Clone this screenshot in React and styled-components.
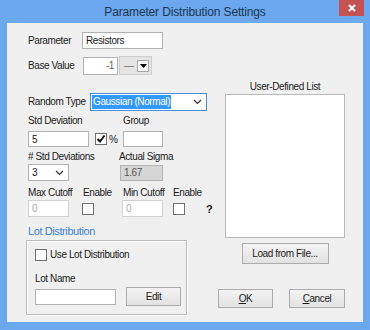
import styled, { createGlobalStyle } from "styled-components";

const GlobalStyle = createGlobalStyle`
  html, body { margin: 0; padding: 0; }
  body {
    font-family: "Liberation Sans", Arial, sans-serif;
    background: #ffffff;
  }
`;

const Window = styled.div`
  width: 370px;
  height: 330px;
  box-sizing: border-box;
  background: #6ba8ee;
  padding: 0 7px 8px 7px;
  display: flex;
  flex-direction: column;
`;

const TitleBar = styled.div`
  height: 23px;
  margin: 0 -7px;
  display: grid;
  grid-template-columns: 1fr auto 1fr;
  align-items: start;
`;

const Title = styled.div`
  grid-column: 2;
  font-size: 12px;
  letter-spacing: -0.15px;
  line-height: 24px;
  color: #1b3552;
  white-space: nowrap;
`;

const CloseButton = styled.div`
  grid-column: 3;
  justify-self: end;
  margin-right: 6px;
  width: 25px;
  height: 16px;
  background: #c75050;
  display: flex;
  align-items: center;
  justify-content: center;
`;

const Client = styled.div`
  flex: 1;
  background: #f0f0f0;
  display: flex;
  padding-left: 19px;
  font-size: 10px;
  letter-spacing: -0.4px;
  color: #1c1c1c;
`;

const LeftCol = styled.div`
  width: 192px;
  display: flex;
  flex-direction: column;
`;

const RightCol = styled.div`
  width: 127px;
  display: flex;
  flex-direction: column;
  padding-top: 58px;
`;

const Row = styled.div`
  display: flex;
  align-items: center;
  height: ${(p) => p.$h}px;
  margin-top: ${(p) => p.$mt}px;
  padding-left: ${(p) => (p.$flush ? 0 : 2)}px;
  white-space: nowrap;
`;

const Slot = styled.div`
  width: ${(p) => p.$w}px;
  flex: none;
  display: flex;
  align-items: center;
`;

const Label = styled.span`
  line-height: 12px;
  white-space: nowrap;
`;

const TextBox = styled.div`
  box-sizing: border-box;
  width: ${(p) => p.$w}px;
  height: ${(p) => p.$h || 17}px;
  background: #fff;
  border: 1px solid ${(p) => (p.$disabled ? "#d2d2d2" : "#b2b2b2")};
  color: ${(p) => (p.$disabled ? "#a8a8a8" : p.$right ? "#666" : "#1c1c1c")};
  display: flex;
  align-items: center;
  justify-content: ${(p) => (p.$right ? "flex-end" : "flex-start")};
  padding: 0 3px 0 3px;
  font-size: 10px;
  flex: none;
`;

const ReadOnlyBox = styled(TextBox)`
  background: #d6d6d6;
  border-color: #b6b6b6;
  color: #555;
`;

const Combo = styled.div`
  box-sizing: border-box;
  width: 33px;
  height: 19px;
  margin-left: 1px;
  background: #e4e4e4;
  border: 1px solid #cdcdcd;
  display: flex;
  align-items: center;
  justify-content: space-between;
  padding: 0 2px 0 4px;
  color: #777;
`;

const ComboButton = styled.div`
  box-sizing: border-box;
  width: 12px;
  height: 12px;
  background: #f7f7f7;
  border: 1px solid #a9a9a9;
  display: flex;
  align-items: center;
  justify-content: center;
`;

const Select = styled.div`
  box-sizing: border-box;
  width: ${(p) => p.$w}px;
  height: ${(p) => p.$h}px;
  background: #fff;
  border: 1px solid ${(p) => (p.$focus ? "#4a8fd6" : "#b2b2b2")};
  display: flex;
  align-items: center;
  justify-content: space-between;
  padding: 0 4px 0 1px;
  flex: none;
`;

const Highlight = styled.span`
  background: #3399ff;
  color: #fff;
  padding: 1px 1px;
  line-height: 12px;
`;

const PlainValue = styled.span`
  padding-left: 2px;
`;

const Check = styled.div`
  box-sizing: border-box;
  width: 12px;
  height: 12px;
  background: #fff;
  border: 1px solid #6f6f6f;
  flex: none;
  display: flex;
  align-items: center;
  justify-content: center;
`;

const Percent = styled.span`
  margin-left: 2px;
`;

const Question = styled.span`
  font-weight: bold;
  font-size: 11px;
  letter-spacing: 0;
`;

const SectionTitle = styled.div`
  margin-top: 7px;
  height: 14px;
  padding-left: 2px;
  line-height: 14px;
  font-size: 11px;
  letter-spacing: -0.4px;
  color: #3c82d8;
`;

const GroupBox = styled.div`
  box-sizing: border-box;
  margin-top: 2px;
  width: 161px;
  height: 75px;
  border: 1px solid #bdbdbd;
  box-shadow: inset 1px 1px 0 #fff, 1px 1px 0 #fff;
  padding: 8px 0 0 8px;
  display: flex;
  flex-direction: column;
`;

const CheckLabel = styled.span`
  margin-left: 3px;
  line-height: 12px;
`;

const Button = styled.div`
  box-sizing: border-box;
  width: ${(p) => p.$w}px;
  height: ${(p) => p.$h}px;
  margin-left: ${(p) => p.$ml || 0}px;
  border: 1px solid #acacac;
  background: linear-gradient(#f3f3f3, #e2e2e2);
  display: flex;
  align-items: center;
  justify-content: center;
  flex: none;
  white-space: nowrap;
`;

const Mnemonic = styled.span`
  text-decoration: underline;
`;

const ListHeader = styled.div`
  margin-left: 7px;
  width: 120px;
  height: 12px;
  line-height: 12px;
  text-align: center;
`;

const ListBox = styled.div`
  box-sizing: border-box;
  margin: 1px 0 0 7px;
  width: 120px;
  height: 144px;
  background: #fff;
  border: 1px solid #b9b9b9;
`;

const LoadRow = styled.div`
  margin: 5px 0 0 7px;
  width: 120px;
  display: flex;
  justify-content: center;
`;

const ActionRow = styled.div`
  margin-top: 25px;
  display: flex;
  gap: 16px;
`;

const CloseGlyph = () => (
  <svg width="8" height="8" viewBox="0 0 8 8">
    <path d="M1 1 L7 7 M7 1 L1 7" stroke="#fff" strokeWidth="2" />
  </svg>
);

const TickMark = () => (
  <svg width="10" height="10" viewBox="0 0 10 10">
    <path d="M1.5 5 L4 7.5 L8.5 1.5" stroke="#111" strokeWidth="2" fill="none" />
  </svg>
);

const Chevron = () => (
  <svg width="9" height="6" viewBox="0 0 9 6">
    <path d="M1 1 L4.5 4.5 L8 1" stroke="#333" strokeWidth="1.2" fill="none" />
  </svg>
);

const DownArrow = () => (
  <svg width="7" height="4" viewBox="0 0 7 4">
    <path d="M0 0 H7 L3.5 4 Z" fill="#000" />
  </svg>
);

export default function App() {
  return (
    <>
      <GlobalStyle />
      <Window>
        <TitleBar>
          <Title>Parameter Distribution Settings</Title>
          <CloseButton>
            <CloseGlyph />
          </CloseButton>
        </TitleBar>
        <Client>
          <LeftCol>
            <Row $mt={9} $h={17}>
              <Slot $w={54}><Label>Parameter</Label></Slot>
              <TextBox $w={81}>Resistors</TextBox>
            </Row>
            <Row $mt={7} $h={19}>
              <Slot $w={55}><Label>Base Value</Label></Slot>
              <TextBox $w={35} $h={18} $right>-1</TextBox>
              <Combo>
                <span>—</span>
                <ComboButton><DownArrow /></ComboButton>
              </Combo>
            </Row>
            <Row $mt={18} $h={18}>
              <Slot $w={62}><Label>Random Type</Label></Slot>
              <Select $w={117} $h={18} $focus>
                <Highlight>Gaussian (Normal)</Highlight>
                <Chevron />
              </Select>
            </Row>

            <Row $mt={4} $h={12}>
              <Slot $w={95}><Label>Std Deviation</Label></Slot>
              <Label>Group</Label>
            </Row>
            <Row $mt={4} $h={16}>
              <Slot $w={67}><TextBox $w={61} $h={16}>5</TextBox></Slot>
              <Slot $w={28}>
                <Check><TickMark /></Check>
                <Percent>%</Percent>
              </Slot>
              <TextBox $w={40} $h={16} />
            </Row>

            <Row $mt={4} $h={12}>
              <Slot $w={91}><Label># Std Deviations</Label></Slot>
              <Label>Actual Sigma</Label>
            </Row>
            <Row $mt={1} $h={17}>
              <Slot $w={92}>
                <Select $w={41} $h={17}>
                  <PlainValue>3</PlainValue>
                  <Chevron />
                </Select>
              </Slot>
              <ReadOnlyBox $w={43} $h={16}>1.67</ReadOnlyBox>
            </Row>

            <Row $mt={6} $h={12}>
              <Slot $w={55}><Label>Max Cutoff</Label></Slot>
              <Slot $w={40}><Label>Enable</Label></Slot>
              <Slot $w={50}><Label>Min Cutoff</Label></Slot>
              <Label>Enable</Label>
            </Row>
            <Row $mt={1} $h={17}>
              <Slot $w={54}><TextBox $w={41} $h={17} $disabled>0</TextBox></Slot>
              <Slot $w={40}><Check /></Slot>
              <Slot $w={51}><TextBox $w={41} $h={17} $disabled>0</TextBox></Slot>
              <Slot $w={33}><Check /></Slot>
              <Question>?</Question>
            </Row>

            <SectionTitle>Lot Distribution</SectionTitle>
            <GroupBox>
              <Row $mt={0} $h={12} $flush>
                <Check />
                <CheckLabel>Use Lot Distribution</CheckLabel>
              </Row>
              <Row $mt={12} $h={12} $flush>
                <Label>Lot Name</Label>
              </Row>
              <Row $mt={2} $h={19} $flush>
                <TextBox $w={81} $h={16} />
                <Button $w={55} $h={19} $ml={10}>Edit</Button>
              </Row>
            </GroupBox>
          </LeftCol>

          <RightCol>
            <ListHeader>User-Defined List</ListHeader>
            <ListBox />
            <LoadRow>
              <Button $w={87} $h={21}>Load from File...</Button>
            </LoadRow>
            <ActionRow>
              <Button $w={55} $h={19}><span><Mnemonic>O</Mnemonic>K</span></Button>
              <Button $w={56} $h={19}><span><Mnemonic>C</Mnemonic>ancel</span></Button>
            </ActionRow>
          </RightCol>
        </Client>
      </Window>
    </>
  );
}
